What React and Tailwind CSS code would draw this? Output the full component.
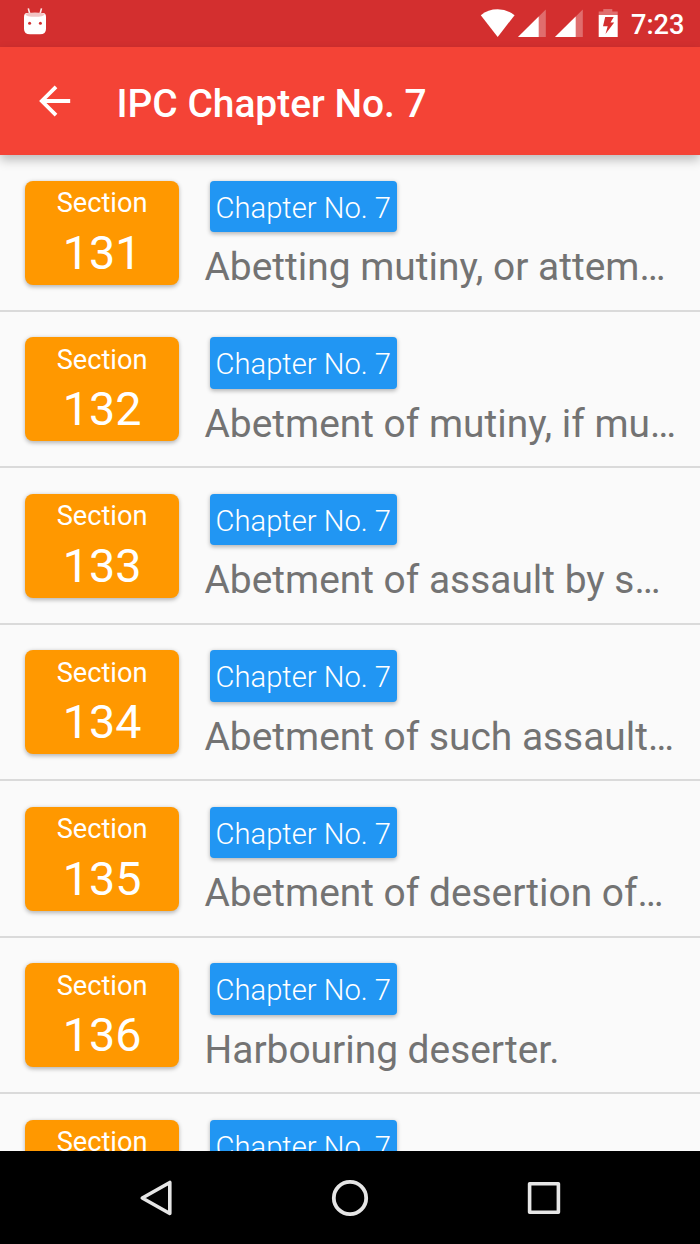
const sections = [
  { number: 131, title: 'Abetting mutiny, or attem…' },
  { number: 132, title: 'Abetment of mutiny, if mu…' },
  { number: 133, title: 'Abetment of assault by s…' },
  { number: 134, title: 'Abetment of such assault…' },
  { number: 135, title: 'Abetment of desertion of…' },
  { number: 136, title: 'Harbouring deserter.' },
  { number: 137, title: '' },
];

function StatusBar() {
  return (
    <header className="flex h-[46.5px] shrink-0 items-start bg-[#d32f2f] pr-[15px] pl-[23px] text-white">
      <svg className="mt-[8px] h-[27px] w-[24px]" viewBox="0 0 24 27" fill="none">
        <path d="M5.3 .4 6.8 6M18.5 .4 17 6" stroke="white" strokeOpacity=".9" strokeWidth="1.6" />
        <path d="M1 9Q1 5.2 4 5H20Q23 5.2 23 9V21Q23 26.3 17 26.3H7Q1 26.3 1 21Z" fill="white" />
        <ellipse cx="12" cy="6.6" rx="9.6" ry="2.2" fill="#f2c4c4" />
        <circle cx="6.6" cy="15.3" r="1.5" fill="#d32f2f" />
        <circle cx="17.4" cy="15.3" r="1.5" fill="#d32f2f" />
      </svg>
      <div className="flex-1" />
      <svg className="mt-[8px] h-[30px] w-[140px]" viewBox="0 0 140 30" fill="white">
        <path d="M17.7 28.9 .8 7.2Q8 1.3 17.7 1.3T34.6 7.2Z" />
        <path d="M65.8 1.5V29H38Z" fillOpacity=".3" />
        <path d="M58.7 8.6V29H38Z" />
        <path d="M102.8 1.5V29H75Z" fillOpacity=".3" />
        <path d="M95.7 8.6V29H75Z" />
        <path d="M118.7 7V3.5H123.3V1H132.3V3.5H137.7V7Z" fillOpacity=".3" />
        <path d="M118.7 7H137.7V29H118.7Z" />
        <path d="M125.2 9H133.7L130.5 14.5H134.2L125.5 26L127.7 18.2H123Z" fill="#d32f2f" />
      </svg>
      <span className="mt-[9px] ml-[11px] w-[54px] text-[27.2px] leading-[32px] font-medium whitespace-nowrap">7:23</span>
    </header>
  );
}

function Toolbar() {
  return (
    <div className="relative z-10 flex h-[108.5px] shrink-0 items-center bg-[#f44336] pl-[39px] text-white shadow-[0_5px_10px_rgba(0,0,0,0.25)]">
      <svg className="h-[32px] w-[32px]" viewBox="0 0 32 32" fill="none" stroke="white" strokeWidth="3.8">
        <path d="M31.2 16H3M17 1.8 2.8 16 17 30.2" />
      </svg>
      <h1 className="mt-[6.5px] ml-[45.5px] text-[38.9px] leading-[46px] font-medium whitespace-nowrap">IPC Chapter No. 7</h1>
    </div>
  );
}

function SectionRow({ number, title }) {
  return (
    <li className="flex h-[156.5px] shrink-0 items-start border-b-2 border-[#dadada] pt-[25.7px] pl-[25.3px]">
      <div className="flex h-[103.9px] w-[153.5px] flex-col items-center rounded-[8px] bg-[#ff9800] text-white shadow-[0_1.5px_4px_rgba(0,0,0,0.28)]">
        <span className="mt-[6.4px] text-[27.2px] leading-[32px]">Section</span>
        <span className="mt-[6.9px] text-[46.7px] leading-[55px]">{number}</span>
      </div>
      <div className="ml-[25.7px] flex flex-col items-start">
        <span className="ml-[5.5px] flex h-[51.4px] w-[186.6px] items-center justify-center rounded-[4px] bg-[#2196f3] pt-[3px] text-[29.17px] leading-[36px] font-light whitespace-nowrap text-white shadow-[0_1.5px_4px_rgba(0,0,0,0.28)]">
          Chapter No. 7
        </span>
        <span className="mt-[12px] text-[38.9px] leading-[46px] whitespace-nowrap text-[#737373]">{title}</span>
      </div>
    </li>
  );
}

function NavigationBar() {
  return (
    <nav className="flex h-[93.5px] shrink-0 items-start justify-between bg-black pt-[27px] pr-[138px] pl-[137.5px]">
      <svg className="h-[40px] w-[36px]" viewBox="0 0 36 40" fill="none" stroke="#e6e6e6" strokeWidth="3.6" strokeLinejoin="round">
        <path d="M31.8 4.5V35.5L4.3 20Z" />
      </svg>
      <svg className="h-[40px] w-[40px]" viewBox="0 0 40 40" fill="none" stroke="#e6e6e6" strokeWidth="3.8">
        <circle cx="20" cy="20" r="16.2" />
      </svg>
      <svg className="h-[40px] w-[36px]" viewBox="0 0 36 40" fill="none" stroke="#e6e6e6" strokeWidth="3.6" strokeLinejoin="round">
        <rect x="3.6" y="5.7" width="28.8" height="28.6" />
      </svg>
    </nav>
  );
}

export default function App() {
  return (
    <div className="flex h-[1244px] w-[700px] flex-col overflow-hidden bg-[#fafafa] font-['Roboto',sans-serif]">
      <StatusBar />
      <Toolbar />
      <ul className="flex min-h-0 flex-1 flex-col overflow-hidden">
        {sections.map((section) => (
          <SectionRow key={section.number} {...section} />
        ))}
      </ul>
      <NavigationBar />
    </div>
  );
}
